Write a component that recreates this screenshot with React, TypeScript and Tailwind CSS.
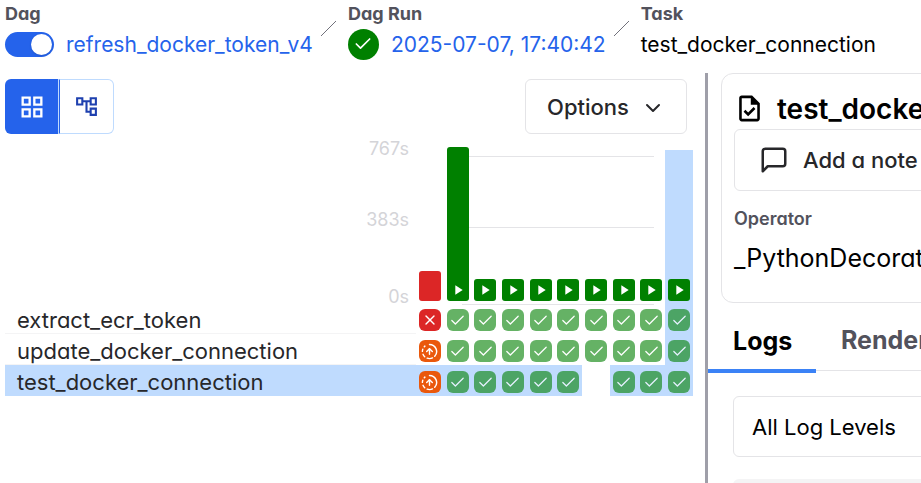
import { useState } from 'react';
import clsx from 'clsx';
import { FiChevronDown, FiMessageSquare } from 'react-icons/fi';
import { LuCheck, LuCircleFadingArrowUp, LuX } from 'react-icons/lu';
import { MdOutlineAccountTree, MdOutlineGridView, MdOutlineTask, MdPlayArrow } from 'react-icons/md';

type State = 'success' | 'failed' | 'upstream_failed' | null;

const MAX_BAR = 154;

const RUNS = [
  { id: 'run-0', height: 30, failed: true },
  { id: 'run-1', height: MAX_BAR },
  { id: 'run-2', height: 22 },
  { id: 'run-3', height: 22 },
  { id: 'run-4', height: 22 },
  { id: 'run-5', height: 22 },
  { id: 'run-6', height: 22 },
  { id: 'run-7', height: 22 },
  { id: 'run-8', height: 22 },
  { id: 'run-9', height: 22 },
];

const SELECTED_RUN = 9;
const SELECTED_TASK = 'test_docker_connection';

const ok = (n: number): State[] => Array.from({ length: n }, () => 'success');

const TASKS: { id: string; states: State[] }[] = [
  { id: 'extract_ecr_token', states: ['failed', ...ok(9)] },
  { id: 'update_docker_connection', states: ['upstream_failed', ...ok(9)] },
  { id: 'test_docker_connection', states: ['upstream_failed', ...ok(5), null, ...ok(3)] },
];

function Slash() {
  return (
    <svg className="mt-5 mr-1 h-[17px] w-[15px] shrink-0 text-zinc-500" viewBox="0 0 15 17" stroke="currentColor" aria-hidden="true">
      <path d="M0 16L15 1" />
    </svg>
  );
}

function StateCell({ state, label }: { state: State; label: string }) {
  if (!state) return null;
  return (
    <a
      href="#"
      aria-label={label}
      className={clsx(
        'flex h-[22px] w-[22px] items-center justify-center rounded-md text-white',
        state === 'success' && 'bg-[#008000] opacity-60',
        state === 'failed' && 'bg-[#dc2626]',
        state === 'upstream_failed' && 'bg-[#ea580c]',
      )}
    >
      {state === 'success' && <LuCheck size={17} strokeWidth={1.75} />}
      {state === 'failed' && <LuX size={16} />}
      {state === 'upstream_failed' && <LuCircleFadingArrowUp size={17} />}
    </a>
  );
}

function Breadcrumb() {
  const [active, setActive] = useState(true);

  return (
    <nav className="flex h-[73px] gap-2 pl-[5px] text-[21px] whitespace-nowrap">
      <div>
        <label htmlFor="dag-active" className="block text-lg leading-7 font-bold text-zinc-600">
          Dag
        </label>
        <div className="flex h-8 items-center gap-3">
          <input
            id="dag-active"
            type="checkbox"
            role="switch"
            checked={active}
            onChange={(e) => setActive(e.target.checked)}
            className="h-[25px] w-[49px] shrink-0 appearance-none rounded-full bg-zinc-300 p-[2px] before:block before:h-[21px] before:w-[21px] before:rounded-full before:bg-white before:shadow-sm checked:bg-[#2563eb] checked:before:ml-6"
          />
          <a href="#" className="pt-px text-[#2563eb]">refresh_docker_token_v4</a>
        </div>
      </div>
      <Slash />
      <div>
        <div className="text-lg leading-7 font-bold text-zinc-600">Dag Run</div>
        <div className="flex h-8 items-center gap-3">
          <span className="flex h-[31px] w-[31px] shrink-0 items-center justify-center rounded-full bg-[#008000] text-white">
            <LuCheck size={20} />
          </span>
          <a href="#" className="pt-px text-[#2563eb]">2025-07-07, 17:40:42</a>
        </div>
      </div>
      <Slash />
      <div>
        <div className="text-lg leading-7 font-bold text-zinc-600">Task</div>
        <div className="flex h-8 items-center pt-px">test_docker_connection</div>
      </div>
    </nav>
  );
}

function Toolbar() {
  return (
    <div className="flex justify-between pr-[6px]">
      <div className="flex h-[55px]">
        <button
          aria-label="Show grid"
          className="flex w-[54px] items-center justify-center rounded-l-md border-r border-[#bfdbfe] bg-[#2563eb] text-white"
        >
          <MdOutlineGridView size={28} />
        </button>
        <button
          aria-label="Show graph"
          className="flex w-[55px] items-center justify-center rounded-r-md border border-[#bfdbfe] border-l-[#2563eb] text-[#1e40af]"
        >
          <MdOutlineAccountTree size={25} />
        </button>
      </div>
      <button className="flex h-[55px] w-[162px] items-center justify-center gap-3 rounded-md border border-zinc-200 pt-[2px] font-medium text-zinc-800">
        Options
        <FiChevronDown size={24} />
      </button>
    </div>
  );
}

function DurationChart() {
  return (
    <div className="flex h-[169px] justify-end">
      <div className="mr-[7px] flex flex-col text-right text-lg leading-5 text-zinc-300">
        <span className="mt-[5px]">767s</span>
        <span className="mt-[51px]">383s</span>
        <span className="mt-[57px]">0s</span>
      </div>
      <div className="relative grid w-[277px] grid-cols-10 items-end">
        {/* gridlines */}
        <div className="absolute top-[22px] right-[39px] left-[46px] h-px bg-zinc-200" />
        <div className="absolute top-[93px] right-[39px] left-[46px] h-px bg-zinc-200" />
        <div className="absolute top-[170px] right-[39px] left-[46px] h-px bg-zinc-200" />
        {RUNS.map(({ id, height, failed }, i) => (
          <div
            key={id}
            className={clsx(
              'relative flex h-[153px] items-end justify-center pb-[2px]',
              i === SELECTED_RUN && 'bg-[#bfdbfe]',
            )}
          >
            <button
              aria-label={id}
              style={{ height }}
              className={clsx(
                'flex w-[22px] shrink-0 items-end justify-center rounded-[3px] pb-[3px] text-white',
                failed ? 'bg-[#dc2626]' : 'bg-[#008000]',
              )}
            >
              {!failed && <MdPlayArrow size={16} />}
            </button>
          </div>
        ))}
      </div>
    </div>
  );
}

function TaskGrid() {
  return (
    <div>
      {TASKS.map(({ id, states }) => {
        const selected = id === SELECTED_TASK;
        return (
          <div key={id} className="flex h-[31px]">
            <a
              href="#"
              className={clsx(
                'flex flex-1 items-center border-b pt-1 pl-3 text-zinc-800',
                selected ? 'border-[#bfdbfe] bg-[#bfdbfe]' : 'border-zinc-100',
              )}
            >
              {id}
            </a>
            <div className="grid w-[277px] grid-cols-10">
              {states.map((state, i) => (
                <div
                  key={RUNS[i].id}
                  className={clsx(
                    'flex justify-center pt-[6px]',
                    state && (selected || i === SELECTED_RUN) && 'bg-[#bfdbfe]',
                  )}
                >
                  <StateCell state={state} label={`${id} ${RUNS[i].id}`} />
                </div>
              ))}
            </div>
          </div>
        );
      })}
    </div>
  );
}

function TaskDetails() {
  return (
    <section className="min-w-0 overflow-hidden whitespace-nowrap">
      <div className="ml-[13px] h-[230px] w-80 rounded-xl border border-zinc-200 pl-3">
        <h2 className="flex h-[55px] items-center gap-3 pt-[14px] text-[28px] font-semibold">
          <MdOutlineTask size={31} className="shrink-0" />
          test_docker_connection
        </h2>
        <button className="flex h-[62px] w-72 items-center gap-[14px] rounded-md border border-zinc-200 pl-6 font-medium text-zinc-800">
          <FiMessageSquare size={30} />
          Add a note
        </button>
        <dl>
          <dt className="mt-[14px] text-lg leading-7 font-semibold text-zinc-600">Operator</dt>
          <dd className="mt-[7px] text-[25px] leading-9">_PythonDecoratedOperator</dd>
        </dl>
      </div>

      <div role="tablist" className="mt-2 flex h-[60px] w-96 border-b border-zinc-200 text-[25px] font-bold">
        <button
          role="tab"
          aria-selected="true"
          className="-mb-[3px] h-[62px] w-[108px] shrink-0 border-b-4 border-[#3b82f6] pt-1 pl-[25px] text-left"
        >
          Logs
        </button>
        <button role="tab" aria-selected="false" className="shrink-0 px-[25px] text-zinc-600">
          Rendered Templates
        </button>
      </div>

      <div className="pt-[25px] pl-[25px]">
        <select
          aria-label="Log level"
          className="h-[61px] w-72 appearance-none rounded-md border border-zinc-200 bg-white pt-[2px] pl-[18px]"
        >
          <option>All Log Levels</option>
        </select>
        <div className="mt-[22px] h-40 w-80 rounded-md bg-zinc-100" />
      </div>
    </section>
  );
}

export default function App() {
  return (
    <div className="flex h-screen flex-col overflow-hidden bg-white font-['Inter',sans-serif] text-[22px] text-black [font-feature-settings:'cv11']">
      <Breadcrumb />
      <main className="grid min-h-0 flex-1 grid-cols-[705fr_3px_213fr]">
        <section className="min-w-0 pt-[6px] pr-3 pl-[5px]">
          <Toolbar />
          <DurationChart />
          <TaskGrid />
        </section>
        <div role="separator" className="bg-zinc-400" />
        <TaskDetails />
      </main>
    </div>
  );
}
